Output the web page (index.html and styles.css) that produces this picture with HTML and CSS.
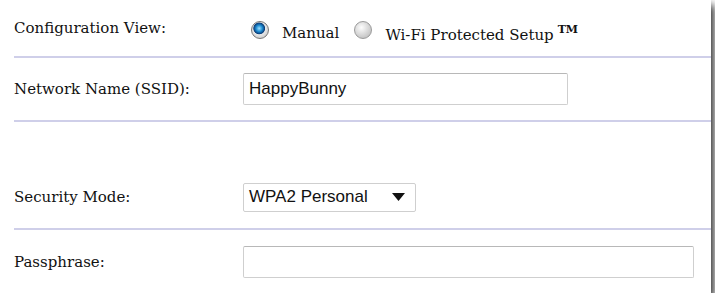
FILE: index.html
```html
<!DOCTYPE html>
<html lang="en">
<head>
  <meta charset="UTF-8">
  <title>Wireless Settings</title>
  <link rel="stylesheet" href="styles.css">
</head>
<body>
  <div class="panel">
    <div class="row first">
      <div class="label">Configuration View:</div>
      <div class="field radios">
        <span class="radio on"></span><span class="opt">Manual</span>
        <span class="radio"></span><span class="opt">Wi-Fi Protected Setup<sup>TM</sup></span>
      </div>
    </div>
    <div class="row">
      <div class="label">Network Name (SSID):</div>
      <div class="field"><div class="box ssid">HappyBunny</div></div>
    </div>
    <div class="row tall">
      <div class="label">Security Mode:</div>
      <div class="field">
        <div class="select">WPA2 Personal
          <svg width="13" height="8" viewBox="0 0 13 8"><path d="M0 0 H13 L6.5 8 Z" fill="#111"/></svg>
        </div>
      </div>
    </div>
    <div class="row last">
      <div class="label">Passphrase:</div>
      <div class="field"><div class="box pass"></div></div>
    </div>
  </div>
</body>
</html>
```

FILE: styles.css
```css
body {
  margin: 0;
  background: #fff;
}
.panel {
  width: 711px;
  height: 293px;
  background: #fff;
  box-shadow: 3px 5px 8px rgba(0, 0, 0, 0.85);
  display: flex;
  flex-direction: column;
}
.row {
  display: flex;
  align-items: center;
  margin-left: 14px;
  height: 62px;
  border-bottom: 2px solid #cfcfe9;
}
.row.first {
  height: 56px;
}
.row.tall {
  box-sizing: border-box;
  height: 108px;
  padding-top: 44px;
}
.row.last {
  border-bottom: none;
  height: 63px;
}
.label {
  width: 229px;
  font-family: "DejaVu Serif", serif;
  font-size: 15px;
  color: #111;
}
.field {
  display: flex;
  align-items: center;
}
.radios {
  padding-left: 8px;
  padding-top: 3px;
  font-family: "DejaVu Serif", serif;
  font-size: 15px;
  color: #111;
}
.opt {
  margin-top: 7px;
}
.opt sup {
  font-weight: bold;
  font-size: 11px;
  margin-left: 4px;
  vertical-align: 7px;
}
.radio {
  width: 18px;
  height: 18px;
  border-radius: 50%;
  box-sizing: border-box;
  border: 1px solid #9a9a9a;
  background: radial-gradient(circle at 40% 35%, #fdfdfd, #c9c9c9 70%, #b5b5b5);
  margin-right: 13px;
}
.radio + .opt {
  margin-right: 15px;
}
.radio.on {
  background: radial-gradient(circle at 45% 40%, #9fe0ff 0, #1b8ad0 25%, #0b3d78 42%, #e8e8e8 48%, #cfcfcf 75%, #9c9c9c 100%);
  border-color: #777;
}
.box {
  height: 32px;
  box-sizing: border-box;
  border: 1px solid #cfcfcf;
  border-top-color: #b8b8b8;
  border-radius: 2px;
  padding-left: 5px;
  font-family: "Liberation Sans", Arial, sans-serif;
  font-size: 17px;
  color: #111;
  display: flex;
  align-items: center;
}
.ssid {
  width: 325px;
}
.pass {
  width: 451px;
}
.select {
  width: 173px;
  height: 29px;
  box-sizing: border-box;
  border: 1px solid #cfcfcf;
  border-radius: 2px;
  padding: 0 10px 0 5px;
  font-family: "Liberation Sans", Arial, sans-serif;
  font-size: 17px;
  color: #111;
  display: flex;
  align-items: center;
  justify-content: space-between;
}
```
